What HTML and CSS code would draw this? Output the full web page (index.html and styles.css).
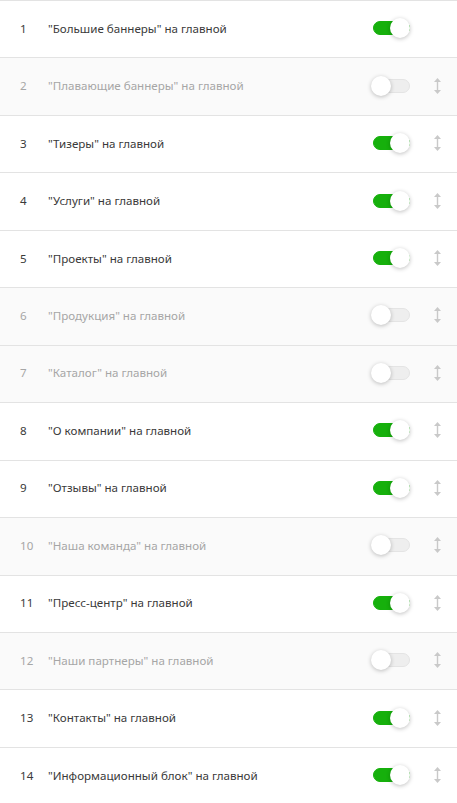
FILE: index.html
```html
<!DOCTYPE html>
<html lang="ru">
<head>
<meta charset="utf-8">
<link rel="stylesheet" href="styles.css">
</head>
<body>
<ul class="list">
  <li class="row"><span class="num">1</span><span class="name">"Большие баннеры" на главной</span><span class="toggle on"><span class="knob"></span></span><span class="drag empty"></span></li>
  <li class="row off"><span class="num">2</span><span class="name">"Плавающие баннеры" на главной</span><span class="toggle"><span class="knob"></span></span><span class="drag"><svg width="7" height="16" viewBox="0 0 7 16"><path d="M3.5 0 L7 4 H4.2 V12 H7 L3.5 16 L0 12 H2.8 V4 H0 Z"/></svg></span></li>
  <li class="row"><span class="num">3</span><span class="name">"Тизеры" на главной</span><span class="toggle on"><span class="knob"></span></span><span class="drag"><svg width="7" height="16" viewBox="0 0 7 16"><path d="M3.5 0 L7 4 H4.2 V12 H7 L3.5 16 L0 12 H2.8 V4 H0 Z"/></svg></span></li>
  <li class="row"><span class="num">4</span><span class="name">"Услуги" на главной</span><span class="toggle on"><span class="knob"></span></span><span class="drag"><svg width="7" height="16" viewBox="0 0 7 16"><path d="M3.5 0 L7 4 H4.2 V12 H7 L3.5 16 L0 12 H2.8 V4 H0 Z"/></svg></span></li>
  <li class="row"><span class="num">5</span><span class="name">"Проекты" на главной</span><span class="toggle on"><span class="knob"></span></span><span class="drag"><svg width="7" height="16" viewBox="0 0 7 16"><path d="M3.5 0 L7 4 H4.2 V12 H7 L3.5 16 L0 12 H2.8 V4 H0 Z"/></svg></span></li>
  <li class="row off"><span class="num">6</span><span class="name">"Продукция" на главной</span><span class="toggle"><span class="knob"></span></span><span class="drag"><svg width="7" height="16" viewBox="0 0 7 16"><path d="M3.5 0 L7 4 H4.2 V12 H7 L3.5 16 L0 12 H2.8 V4 H0 Z"/></svg></span></li>
  <li class="row off"><span class="num">7</span><span class="name">"Каталог" на главной</span><span class="toggle"><span class="knob"></span></span><span class="drag"><svg width="7" height="16" viewBox="0 0 7 16"><path d="M3.5 0 L7 4 H4.2 V12 H7 L3.5 16 L0 12 H2.8 V4 H0 Z"/></svg></span></li>
  <li class="row"><span class="num">8</span><span class="name">"О компании" на главной</span><span class="toggle on"><span class="knob"></span></span><span class="drag"><svg width="7" height="16" viewBox="0 0 7 16"><path d="M3.5 0 L7 4 H4.2 V12 H7 L3.5 16 L0 12 H2.8 V4 H0 Z"/></svg></span></li>
  <li class="row"><span class="num">9</span><span class="name">"Отзывы" на главной</span><span class="toggle on"><span class="knob"></span></span><span class="drag"><svg width="7" height="16" viewBox="0 0 7 16"><path d="M3.5 0 L7 4 H4.2 V12 H7 L3.5 16 L0 12 H2.8 V4 H0 Z"/></svg></span></li>
  <li class="row off"><span class="num">10</span><span class="name">"Наша команда" на главной</span><span class="toggle"><span class="knob"></span></span><span class="drag"><svg width="7" height="16" viewBox="0 0 7 16"><path d="M3.5 0 L7 4 H4.2 V12 H7 L3.5 16 L0 12 H2.8 V4 H0 Z"/></svg></span></li>
  <li class="row"><span class="num">11</span><span class="name">"Пресс-центр" на главной</span><span class="toggle on"><span class="knob"></span></span><span class="drag"><svg width="7" height="16" viewBox="0 0 7 16"><path d="M3.5 0 L7 4 H4.2 V12 H7 L3.5 16 L0 12 H2.8 V4 H0 Z"/></svg></span></li>
  <li class="row off"><span class="num">12</span><span class="name">"Наши партнеры" на главной</span><span class="toggle"><span class="knob"></span></span><span class="drag"><svg width="7" height="16" viewBox="0 0 7 16"><path d="M3.5 0 L7 4 H4.2 V12 H7 L3.5 16 L0 12 H2.8 V4 H0 Z"/></svg></span></li>
  <li class="row"><span class="num">13</span><span class="name">"Контакты" на главной</span><span class="toggle on"><span class="knob"></span></span><span class="drag"><svg width="7" height="16" viewBox="0 0 7 16"><path d="M3.5 0 L7 4 H4.2 V12 H7 L3.5 16 L0 12 H2.8 V4 H0 Z"/></svg></span></li>
  <li class="row"><span class="num">14</span><span class="name">"Информационный блок" на главной</span><span class="toggle on"><span class="knob"></span></span><span class="drag"><svg width="7" height="16" viewBox="0 0 7 16"><path d="M3.5 0 L7 4 H4.2 V12 H7 L3.5 16 L0 12 H2.8 V4 H0 Z"/></svg></span></li>
</ul>
</body>
</html>
```
FILE: styles.css
```css
html, body {
  margin: 0;
  padding: 0;
  background: #fff;
}
body {
  font-family: "Noto Sans", "Open Sans", sans-serif;
  font-size: 11.6px;
  color: #3a3a3a;
}
.list {
  list-style: none;
  margin: 0;
  padding: 0;
}
.row {
  box-sizing: border-box;
  height: 57.46px;
  border-top: 1px solid #e3e3e3;
  display: flex;
  align-items: center;
  padding-left: 20px;
  padding-bottom: 2px;
  background: #fff;
}
.row.off {
  background: #fafafa;
  color: #a6a6a6;
}
.num {
  width: 28px;
  flex: none;
}
.name {
  flex: 1;
}
.toggle {
  position: relative;
  flex: none;
  width: 37px;
  height: 14px;
  border-radius: 7px;
  background: #eeeeee;
  border: 1px solid #e4e4e4;
  box-sizing: border-box;
  margin-right: 24px;
}
.toggle.on {
  background: #16b00c;
  border-color: #16b00c;
}
.knob {
  position: absolute;
  top: -4px;
  left: -3px;
  width: 20px;
  height: 20px;
  border-radius: 50%;
  background: #fff;
  box-shadow: 0 1px 4px rgba(0, 0, 0, 0.25);
}
.toggle.on .knob {
  left: auto;
  right: -1px;
}
.drag {
  flex: none;
  width: 7px;
  margin-right: 16px;
  display: flex;
  align-items: center;
}
.drag svg {
  fill: #c9c9c9;
  display: block;
}
```
